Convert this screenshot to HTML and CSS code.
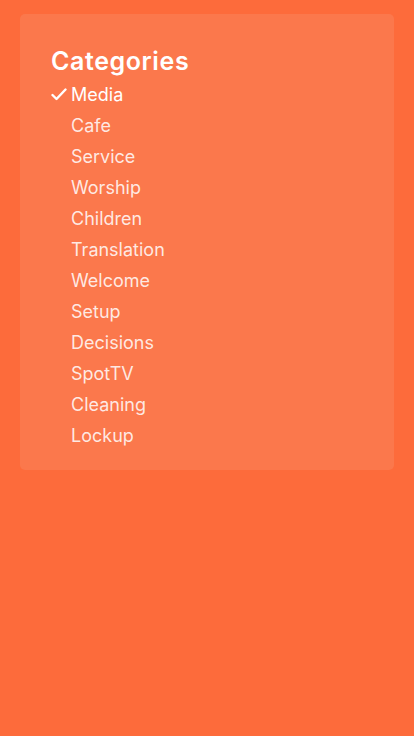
FILE: index.html
```html
<!DOCTYPE html>
<html>
<head>
<meta charset="utf-8">
<link rel="stylesheet" href="styles.css">
</head>
<body>
<div class="card">
  <h1 class="title">Categories</h1>
  <ul class="list">
    <li class="item active"><span class="check"><svg width="16" height="13" viewBox="0 0 16 13"><path d="M1.5 7 L5.5 11 L14.5 1.5" fill="none" stroke="#fff" stroke-width="2.4" stroke-linecap="round" stroke-linejoin="round"/></svg></span><span>Media</span></li>
    <li class="item"><span class="check"></span><span>Cafe</span></li>
    <li class="item"><span class="check"></span><span>Service</span></li>
    <li class="item"><span class="check"></span><span>Worship</span></li>
    <li class="item"><span class="check"></span><span>Children</span></li>
    <li class="item"><span class="check"></span><span>Translation</span></li>
    <li class="item"><span class="check"></span><span>Welcome</span></li>
    <li class="item"><span class="check"></span><span>Setup</span></li>
    <li class="item"><span class="check"></span><span>Decisions</span></li>
    <li class="item"><span class="check"></span><span>SpotTV</span></li>
    <li class="item"><span class="check"></span><span>Cleaning</span></li>
    <li class="item"><span class="check"></span><span>Lockup</span></li>
  </ul>
</div>
</body>
</html>
```
FILE: styles.css
```css
html, body {
  margin: 0;
  padding: 0;
}
body {
  background: #fd6b3b;
  font-family: Inter, "Noto Sans", sans-serif;
  color: #fff;
  width: 414px;
  height: 736px;
  padding: 14px 20px;
  box-sizing: border-box;
}
.card {
  background: #fb784c;
  border-radius: 5px;
  padding: 32px 31px 19px;
}
.title {
  margin: 0 0 3px;
  font-size: 25px;
  font-weight: 600;
  line-height: 30px;
  letter-spacing: 0.6px;
}
.list {
  list-style: none;
  margin: 0;
  padding: 0;
}
.item {
  display: flex;
  align-items: center;
  height: 31px;
  font-size: 18px;
  color: rgba(255, 255, 255, 0.85);
}
.item.active {
  color: #fff;
}
.check {
  width: 20px;
  flex: none;
  display: flex;
  align-items: center;
}
```
